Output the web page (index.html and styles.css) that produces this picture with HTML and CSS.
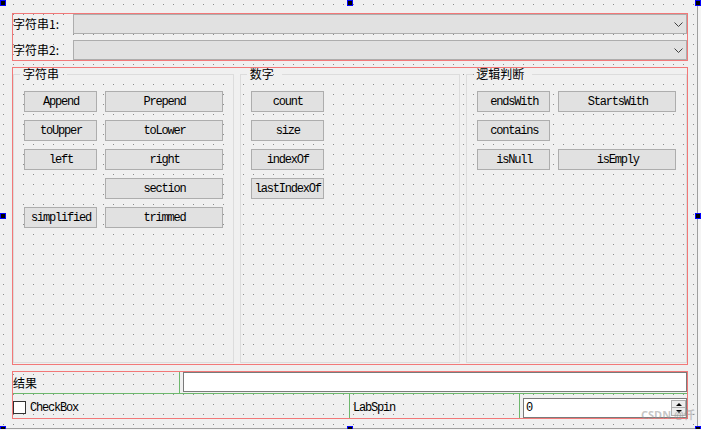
FILE: index.html
```html
<!DOCTYPE html>
<html lang="zh-CN">
<head>
<meta charset="utf-8">
<title>Form</title>
<link rel="stylesheet" href="styles.css">
</head>
<body>
<div class="form">
  <div class="box top">
    <div class="row">
      <span class="lbl">字符串1:</span>
      <div class="combo"><svg class="chev" width="9" height="5" viewBox="0 0 9 5"><polyline points="0.5,0.5 4.5,4.5 8.5,0.5" fill="none" stroke="#404040" stroke-width="1"/></svg></div>
    </div>
    <div class="row">
      <span class="lbl">字符串2:</span>
      <div class="combo"><svg class="chev" width="9" height="5" viewBox="0 0 9 5"><polyline points="0.5,0.5 4.5,4.5 8.5,0.5" fill="none" stroke="#404040" stroke-width="1"/></svg></div>
    </div>
  </div>

  <div class="box groups">
    <fieldset class="group">
      <legend>字符串</legend>
      <div class="btns">
        <button class="btn">Append</button>
        <button class="btn">Prepend</button>
        <button class="btn">toUpper</button>
        <button class="btn">toLower</button>
        <button class="btn">left</button>
        <button class="btn">right</button>
        <button class="btn col2">section</button>
        <button class="btn">simplified</button>
        <button class="btn">trimmed</button>
      </div>
    </fieldset>
    <fieldset class="group">
      <legend>数字</legend>
      <div class="btns one">
        <button class="btn">count</button>
        <button class="btn">size</button>
        <button class="btn">indexOf</button>
        <button class="btn">lastIndexOf</button>
      </div>
    </fieldset>
    <fieldset class="group">
      <legend>逻辑判断</legend>
      <div class="btns">
        <button class="btn">endsWith</button>
        <button class="btn">StartsWith</button>
        <button class="btn">contains</button>
        <button class="btn col1">isNull</button>
        <button class="btn">isEmply</button>
      </div>
    </fieldset>
  </div>

  <div class="box bottom">
    <div class="brow r1">
      <div class="cell c-result">结果</div>
      <div class="edit"></div>
    </div>
    <div class="brow r2">
      <div class="cell c-check"><span class="cb"></span><span class="mono">CheckBox</span></div>
      <div class="cell c-lab"><span class="mono">LabSpin</span></div>
      <div class="spin">
        <span class="val">0</span>
        <span class="arrows"><span class="up"></span><span class="down"></span></span>
      </div>
    </div>
  </div>

  <span class="wm">CSDN @仟</span>

  <span class="h h-tl"></span>
  <span class="h h-tm"></span>
  <span class="h h-tr"></span>
  <span class="h h-ml"></span>
  <span class="h h-mr"></span>
  <span class="h h-bl"></span>
  <span class="h h-bm"></span>
  <span class="h h-br"></span>
</div>
</body>
</html>
```

FILE: styles.css
```css
* { box-sizing: border-box; }

html, body {
  margin: 0;
  background: #f5f5f5;
}

body {
  font-family: "Noto Sans CJK SC", "Noto Sans", sans-serif;
  font-size: 12px;
  color: #000;
  overflow: hidden;
}

.form {
  position: relative;
  width: 698px;
  height: 429px;
  padding: 13px 9px 0 12px;
  border-right: 1px solid #a0a0a0;
  border-bottom: 1px solid #a0a0a0;
  background-color: #f0f0f0;
  background-image:
    linear-gradient(to right, transparent 1px, #f0f0f0 1px),
    linear-gradient(to bottom, #8c8c8c 1px, transparent 1px);
  background-size: 10px 10px;
  background-position: 3px 4px;
}

.box {
  border: 1px solid #f27878;
}

/* top combos */
.top {
  display: flex;
  flex-direction: column;
  gap: 6px;
}

.row {
  display: flex;
  align-items: center;
  height: 20px;
}

.lbl {
  width: 60px;
  line-height: 20px;
  white-space: nowrap;
}

.combo {
  flex: 1;
  height: 20px;
  background: #e1e1e1;
  border: 1px solid #adadad;
  display: flex;
  align-items: center;
  justify-content: flex-end;
  padding-right: 3px;
}

.chev { display: block; margin-top: 1px; }

/* group boxes */
.groups {
  margin-top: 6px;
  height: 298px;
  display: flex;
  gap: 6px;
  align-items: flex-start;
}

.group {
  flex: 1 1 0;
  min-width: 0;
  margin: 0;
  height: 295px;
  border: 1px solid #dcdcdc;
  padding: 11px 10px 0 10px;
}

.group legend {
  font-size: 12px;
  line-height: 12px;
  padding: 0 8px 0 3px;
  margin-left: -4px;
}

.btns {
  display: grid;
  grid-template-columns: 73px 118px;
  grid-auto-rows: 21px;
  gap: 8px;
}

.btns.one { grid-template-columns: 73px; }

.col1 { grid-column: 1; }
.col2 { grid-column: 2; }

.btn, .mono, .val {
  font-family: "Liberation Mono", monospace;
  font-size: 12px;
  letter-spacing: -1.2px;
  color: #000;
}

.btn {
  margin: 0;
  padding: 0 0 0 1px;
  height: 21px;
  border: 1px solid #adadad;
  background: #e1e1e1;
  display: flex;
  align-items: center;
  justify-content: center;
  white-space: nowrap;
}

/* bottom area */
.bottom { margin-top: 6px; }

.brow { display: flex; }

.r1 {
  height: 22px;
  border-bottom: 1px solid #6cb86c;
}

.c-result {
  width: 167px;
  border-right: 1px solid #6cb86c;
  display: flex;
  align-items: center;
}

.edit {
  margin-left: 3px;
  flex: 1;
  height: 20px;
  border: 1px solid #7a7a7a;
  background: #fff;
}

.r2 { height: 24px; }

.c-check {
  width: 337px;
  border-right: 1px solid #6cb86c;
  display: flex;
  align-items: center;
  padding-top: 3px;
}

.cb {
  width: 13px;
  height: 13px;
  border: 1px solid #333;
  background: #fff;
  margin-right: 4px;
}

.c-lab {
  width: 170px;
  border-right: 1px solid #6cb86c;
  display: flex;
  align-items: center;
  padding: 3px 0 0 3px;
}

.spin {
  margin-left: 3px;
  flex: 1;
  height: 20px;
  align-self: flex-end;
  border: 1px solid #7a7a7a;
  background: #fff;
  display: flex;
}

.val {
  flex: 1;
  padding-left: 2px;
  line-height: 18px;
}

.arrows {
  width: 15px;
  height: 16px;
  margin-top: 1px;
  display: flex;
  flex-direction: column;
}

.up, .down {
  height: 8px;
  border: 1px solid #adadad;
  background: #ececec;
  display: flex;
  align-items: center;
  justify-content: center;
}

.down { border-top: none; }

.up::after, .down::after {
  content: "";
  width: 0;
  height: 0;
  border-left: 3px solid transparent;
  border-right: 3px solid transparent;
}

.up::after { border-bottom: 3px solid #000; }
.down::after { border-top: 3px solid #000; }

/* watermark overlay */
.wm {
  position: absolute;
  left: 641px;
  top: 406px;
  font-family: "Noto Sans", sans-serif;
  font-size: 11px;
  font-weight: bold;
  color: rgba(150, 150, 150, 0.55);
  white-space: nowrap;
}

/* selection handles */
.h {
  position: absolute;
  width: 6px;
  height: 6px;
  background: #000;
  border: 1px solid #0000ff;
}
.h-tl { left: 0; top: 0; }
.h-tm { left: 347px; top: 0; }
.h-tr { left: 695px; top: 0; }
.h-ml { left: 0; top: 213px; }
.h-mr { left: 695px; top: 213px; }
.h-bl { left: 0; top: 426px; }
.h-bm { left: 347px; top: 426px; }
.h-br { left: 695px; top: 426px; }
```
